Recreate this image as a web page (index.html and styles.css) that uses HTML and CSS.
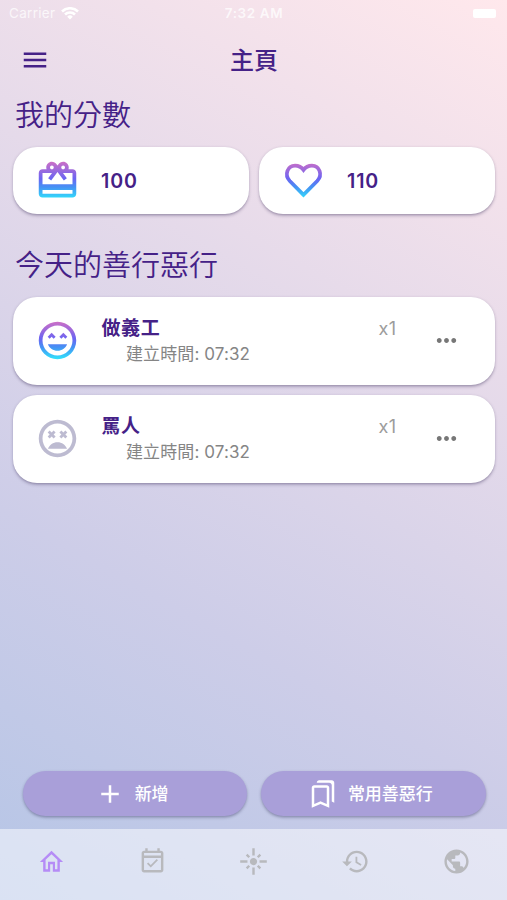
FILE: index.html
```html
<!DOCTYPE html>
<html lang="zh-Hant">
<head>
<meta charset="utf-8">
<title>主頁</title>
<link rel="stylesheet" href="styles.css">
</head>
<body>
<svg class="defs" width="0" height="0" aria-hidden="true">
  <defs>
    <linearGradient id="rainbow" gradientUnits="userSpaceOnUse" x1="12" y1="2" x2="12" y2="22">
      <stop offset="0" stop-color="#cc6fc6"/>
      <stop offset="0.45" stop-color="#6c64f2"/>
      <stop offset="0.68" stop-color="#4592f4"/>
      <stop offset="1" stop-color="#30e4fb"/>
    </linearGradient>
  </defs>
</svg>
<div class="screen">
  <header class="status">
    <div class="carrier"><span>Carrier</span>
      <svg class="wifi" viewBox="0 0 18 13"><path d="M9 12.6 6.2 9.7a4 4 0 0 1 5.6 0zM4.9 8.4 3.1 6.6a8.4 8.4 0 0 1 11.8 0l-1.8 1.8a5.8 5.8 0 0 0-8.2 0zM1.9 5.4.1 3.6a12.7 12.7 0 0 1 17.8 0l-1.8 1.8a10.1 10.1 0 0 0-14.2 0z"/></svg>
    </div>
    <div class="clock">7:32 AM</div>
    <div class="battery"></div>
  </header>
  <div class="appbar">
    <svg class="menu" viewBox="0 0 24 24"><path d="M3 18h18v-2H3v2zm0-5h18v-2H3v2zm0-7v2h18V6H3z"/></svg>
    <h1>主頁</h1>
  </div>
  <main>
    <h2>我的分數</h2>
    <section class="scores">
      <div class="card score">
        <svg class="big" viewBox="0 0 24 24"><path d="M20 6h-2.18c.11-.31.18-.65.18-1 0-1.66-1.34-3-3-3-1.05 0-1.96.54-2.5 1.35l-.5.67-.5-.68C10.96 2.54 10.05 2 9 2 7.34 2 6 3.34 6 5c0 .35.07.69.18 1H4c-1.11 0-1.99.89-1.99 2L2 19c0 1.11.89 2 2 2h16c1.11 0 2-.89 2-2V8c0-1.11-.89-2-2-2zm-5-2c.55 0 1 .45 1 1s-.45 1-1 1-1-.45-1-1 .45-1 1-1zM9 4c.55 0 1 .45 1 1s-.45 1-1 1-1-.45-1-1 .45-1 1-1zm11 15H4v-2h16v2zm0-5H4V8h5.08L7 10.83 8.62 12 12 7.4l3.38 4.6L17 10.83 14.92 8H20v6z"/></svg>
        <strong>100</strong>
      </div>
      <div class="card score">
        <svg class="big heart" viewBox="0 0 24 24"><path d="M12 19.7 4.7 12.3C1.6 8.9 3.5 4 7.5 4c2 0 3.5 .9 4.5 2.3C13 4.9 14.5 4 16.5 4c4 0 5.9 4.9 2.8 8.3z"/></svg>
        <strong>110</strong>
      </div>
    </section>
    <h2 class="today">今天的善行惡行</h2>
    <section class="deeds">
      <article class="card deed">
        <svg class="big" viewBox="0 0 24 24"><path d="M11.99 2C6.47 2 2 6.47 2 12s4.47 10 9.99 10S22 17.53 22 12 17.52 2 11.99 2zM12 20c-4.42 0-8-3.58-8-8s3.58-8 8-8 8 3.58 8 8-3.58 8-8 8zm1-10.06L14.06 11l1.06-1.06L16.18 11l1.06-1.06-2.12-2.12zm-4.12 0L9.94 11 11 9.94 8.88 7.82 6.76 9.94 7.82 11zM12 17.5c2.33 0 4.31-1.46 5.11-3.5H6.89c.8 2.04 2.78 3.5 5.11 3.5z"/></svg>
        <div class="info"><strong>做義工</strong><p>建立時間: 07:32</p></div>
        <span class="count">x1</span>
        <svg class="more" viewBox="0 0 24 24"><path d="M6 10c-1.1 0-2 .9-2 2s.9 2 2 2 2-.9 2-2-.9-2-2-2zm12 0c-1.1 0-2 .9-2 2s.9 2 2 2 2-.9 2-2-.9-2-2-2zm-6 0c-1.1 0-2 .9-2 2s.9 2 2 2 2-.9 2-2-.9-2-2-2z"/></svg>
      </article>
      <article class="card deed">
        <svg class="big muted" viewBox="0 0 24 24"><path d="M11.99 2C6.47 2 2 6.47 2 12s4.47 10 9.99 10S22 17.53 22 12 17.52 2 11.99 2zM12 20c-4.42 0-8-3.58-8-8s3.58-8 8-8 8 3.58 8 8-3.58 8-8 8zM7.82 12l1.06-1.06L9.94 12 11 10.94 9.94 9.88 11 8.82 9.94 7.76 8.88 8.82 7.82 7.76 6.76 8.82l1.06 1.06-1.06 1.06zM14.06 12l1.06-1.06L16.18 12l1.06-1.06-1.06-1.06 1.06-1.06-1.06-1.06-1.06 1.06-1.06-1.06L13 8.82l1.06 1.06L13 10.94zM12 14c-2.33 0-4.31 1.46-5.11 3.5h10.22c-.8-2.04-2.78-3.5-5.11-3.5z"/></svg>
        <div class="info"><strong>罵人</strong><p>建立時間: 07:32</p></div>
        <span class="count">x1</span>
        <svg class="more" viewBox="0 0 24 24"><path d="M6 10c-1.1 0-2 .9-2 2s.9 2 2 2 2-.9 2-2-.9-2-2-2zm12 0c-1.1 0-2 .9-2 2s.9 2 2 2 2-.9 2-2-.9-2-2-2zm-6 0c-1.1 0-2 .9-2 2s.9 2 2 2 2-.9 2-2-.9-2-2-2z"/></svg>
      </article>
    </section>
  </main>
  <div class="actions">
    <button type="button"><svg viewBox="0 0 24 24"><path d="M19 13h-6v6h-2v-6H5v-2h6V5h2v6h6v2z"/></svg><span>新增</span></button>
    <button type="button"><svg viewBox="0 0 24 24"><path d="M15 7v12.97l-4.21-1.81-.79-.34-.79.34L5 19.97V7h10m4-6H8.99C7.89 1 7 1.9 7 3h10c1.1 0 2 .9 2 2v13l2 1V3c0-1.1-.9-2-2-2zm-4 4H5c-1.1 0-2 .9-2 2v16l7-3 7 3V7c0-1.1-.9-2-2-2z"/></svg><span>常用善惡行</span></button>
  </div>
  <nav>
    <a class="active"><svg viewBox="0 0 24 24"><path d="M12 5.9l4.9 4.6v8h-2v-6.2H9.1v6.2h-2v-8L12 5.9M12 3 2.4 12.4h2.7v8.1h5.8v-6.3h2.2v6.3h5.8v-8.1h2.7L12 3z"/></svg></a>
    <a><svg viewBox="0 0 24 24"><path d="M16.53 11.06L15.47 10l-4.88 4.88-2.12-2.12-1.06 1.06L10.59 17l5.94-5.94zM19 3h-1V1h-2v2H8V1H6v2H5c-1.11 0-1.99.9-1.99 2L3 19c0 1.1.89 2 2 2h14c1.1 0 2-.9 2-2V5c0-1.1-.9-2-2-2zm0 16H5V9h14v10zM19 7H5V5h14v2z"/></svg></a>
    <a><svg viewBox="0 0 24 24"><path d="M7 11H1v2h6v-2zm2.17-3.24L7.05 5.64 5.64 7.05l2.12 2.12 1.41-1.41zM13 1h-2v6h2V1zm5.36 6.05l-1.41-1.41-2.12 2.12 1.41 1.41 2.12-2.12zM17 11v2h6v-2h-6zm-5-2c-1.66 0-3 1.34-3 3s1.34 3 3 3 3-1.34 3-3-1.34-3-3-3zm2.83 7.24l2.12 2.12 1.41-1.41-2.12-2.12-1.41 1.41zm-9.19.71l1.41 1.41 2.12-2.12-1.41-1.41-2.12 2.12zM11 23h2v-6h-2v6z"/></svg></a>
    <a><svg viewBox="0 0 24 24"><path d="M13 3c-4.97 0-9 4.03-9 9H1l3.89 3.89.07.14L9 12H6c0-3.87 3.13-7 7-7s7 3.13 7 7-3.13 7-7 7c-1.93 0-3.68-.79-4.94-2.06l-1.42 1.42C8.27 19.99 10.51 21 13 21c4.97 0 9-4.03 9-9s-4.03-9-9-9zm-1 5v5l4.28 2.54.72-1.21-3.5-2.08V8H12z"/></svg></a>
    <a><svg viewBox="0 0 24 24"><path d="M12 2C6.48 2 2 6.48 2 12s4.48 10 10 10 10-4.48 10-10S17.52 2 12 2zm-1 17.93c-3.95-.49-7-3.85-7-7.93 0-.62.08-1.21.21-1.79L9 15v1c0 1.1.9 2 2 2v1.93zm6.9-2.54c-.26-.81-1-1.39-1.9-1.39h-1v-3c0-.55-.45-1-1-1H8v-2h2c.55 0 1-.45 1-1V7h2c1.1 0 2-.9 2-2v-.41c2.93 1.19 5 4.06 5 7.41 0 2.08-.8 3.97-2.1 5.39z"/></svg></a>
  </nav>
</div>
</body>
</html>
```
FILE: styles.css
```css
* { box-sizing: border-box; margin: 0; padding: 0; }
body { font-family: Inter, "Noto Sans CJK TC", sans-serif; color: #452187; }
svg { display: block; flex: none; fill: currentColor; }
.defs { position: absolute; }
.screen {
  height: 900px;
  display: flex;
  flex-direction: column;
  background: linear-gradient(29.4deg, #b5c5e6, #cdcde8 33%, #ffe8ec);
}
.status {
  height: 27px;
  padding: 0 11px 0 9px;
  display: grid;
  grid-template-columns: 1fr auto 1fr;
  align-items: center;
  color: rgba(255, 255, 255, .75);
  font-size: 13.5px;
  line-height: 27px;
}
.carrier { display: flex; align-items: center; gap: 6px; letter-spacing: .3px; }
.wifi { width: 18px; height: 13px; color: #fff; }
.clock { font-weight: 600; letter-spacing: .6px; padding-left: 3px; }
.battery { justify-self: end; width: 23px; height: 9px; border-radius: 2px; background: #fff; }
.appbar {
  height: 66px;
  display: grid;
  grid-template-columns: 70px 1fr 70px;
  align-items: center;
}
.menu { width: 30px; height: 30px; margin-left: 20px; }
h1 { text-align: center; font-size: 24px; font-weight: 500; line-height: 34px; padding: 1px 0 0 1px; }
main { flex: 1; padding: 0 12px 0 13px; }
h2 { font-size: 29px; font-weight: 350; line-height: 42px; padding: 2px 0 0 2px; }
.card {
  background: #fff;
  border-radius: 24px;
  box-shadow: 0 1.5px 3px rgba(70, 60, 100, .34), 0 1px 1px rgba(70, 60, 100, .12);
  display: flex;
}
.scores { display: grid; grid-template-columns: 1fr 1fr; gap: 10px; margin-top: 10px; }
.score { height: 67px; align-items: center; padding-left: 21.5px; }
.big { width: 45px; height: 45px; fill: url(#rainbow); }
.big.muted { fill: #bdbbd1; }
.big.heart { fill: none; stroke: url(#rainbow); stroke-width: 2; }
.score strong, .info strong { font-size: 19px; font-weight: 600; line-height: 26px; }
.score strong { margin: 1px 0 0 21.5px; font-size: 19.6px; letter-spacing: .9px; }
.info strong { display: block; letter-spacing: .6px; }
.today { margin-top: 29px; }
.deeds { display: flex; flex-direction: column; gap: 10px; margin-top: 9.5px; }
.deed { height: 88px; align-items: center; padding: 0 34.5px 0 21.5px; }
.info { width: 277px; margin-left: 22px; padding-top: 2px; }
.info p { font-size: 17px; line-height: 25px; padding-left: 24.5px; color: #858585; letter-spacing: .1px; }
.count { align-self: flex-start; margin-top: 20px; font-size: 18px; line-height: 24px; color: #9c9c9c; letter-spacing: .3px; }
.more { width: 29px; height: 29px; margin-left: auto; color: #777; }
.actions { display: grid; grid-template-columns: 1fr 1fr; gap: 14px; padding: 0 21px 13px 22.5px; }
.actions button {
  height: 45px;
  border: 0;
  border-radius: 23px;
  background: #a99fd9;
  box-shadow: 0 1.5px 3px rgba(50, 50, 90, .42);
  color: #fff;
  font: 500 17px/24px Inter, "Noto Sans CJK TC", sans-serif;
  display: flex;
  align-items: center;
  justify-content: center;
  gap: 9.5px;
  padding-right: 6px;
}
.actions svg { width: 30px; height: 30px; }
nav {
  height: 71px;
  padding: 0 0 6px 1px;
  display: grid;
  grid-template-columns: repeat(5, 1fr);
  place-items: center;
  background: rgba(255, 255, 255, .5);
  color: #b8b9bd;
}
nav svg { width: 29px; height: 29px; }
nav .active { color: #b58cf6; }
```
